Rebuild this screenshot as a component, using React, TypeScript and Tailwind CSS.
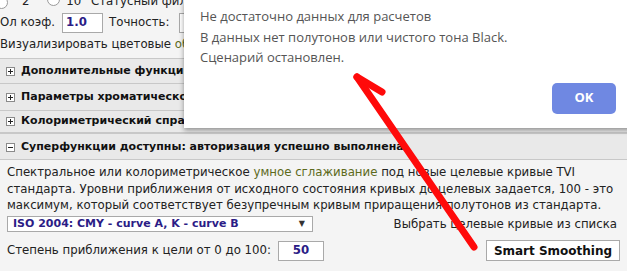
function Radio() {
  return (
    <span className="inline-block w-[13px] h-[13px] rounded-full border border-[#9a9a9a] bg-white shrink-0" />
  );
}

function Toggle({ open }: { open?: boolean }) {
  return (
    <svg width="9" height="9" viewBox="0 0 9 9" className="shrink-0">
      <rect x="0.5" y="0.5" width="8" height="8" fill="#fff" stroke="#8a8a8a" />
      <path d="M2 4.5h5" stroke="#222" />
      {!open && <path d="M4.5 2v5" stroke="#222" />}
    </svg>
  );
}

function Section({ title, open, h }: { title: string; open?: boolean; h: string }) {
  return (
    <div className={`${h} flex items-center gap-[6px] pl-[6px] border-t border-[#c8c8c8] bg-[#e9e9e9] font-bold text-[11px] text-[#111] whitespace-nowrap`}>
      <Toggle open={open} />
      <span>{title}</span>
    </div>
  );
}

export default function App() {
  return (
    <div className="relative w-[627px] h-[271px] overflow-hidden bg-[#f4f4f4] text-[11.75px] text-[#222] font-['DejaVu_Sans',Verdana,sans-serif]">
      {/* top settings rows, partly scrolled out */}
      <div className="-mt-[8px] whitespace-nowrap">
        <div className="h-[20px] flex items-center -ml-[5px]">
          <Radio />
          <span className="ml-[14px]">2°</span>
          <span className="ml-[12px]"><Radio /></span>
          <span className="ml-[6px]">10° Статусный фильтр</span>
        </div>
        <div className="h-[22px] flex items-center">
          <span>Ол коэф.</span>
          <span className="ml-[7px] w-[41px] h-[20px] bg-white border border-[#a9a9a9] flex items-center pl-[3px] font-bold text-[#2b1c86]">1.0</span>
          <span className="ml-[6px]">Точность:</span>
          <span className="ml-[10px] w-[40px] h-[20px] bg-white border border-[#a9a9a9]" />
        </div>
        <div className="h-[22px] flex items-center">
          <span>Визуализировать цветовые&nbsp;</span>
          <span className="text-[#5d6a1c]">обходы</span>
        </div>
      </div>

      <div className="mt-[2px]">
        <Section h="h-[25px]" title="Дополнительные функции" />
        <Section h="h-[27px]" title="Параметры хроматической адаптации" />
        <Section h="h-[22px]" title="Колориметрический справочник" />
        <Section h="h-[27px] pt-[2px] border-t-2" title="Суперфункции доступны: авторизация успешно выполнена" open />
        <div className="border-t border-[#c8c8c8] px-[7px] pt-[4px]">
          <p className="leading-[16.5px] whitespace-nowrap">
            Спектральное или колориметрическое <span className="text-[#5d6a1c]">умное сглаживание</span> под новые целевые кривые TVI
            <br />
            стандарта. Уровни приближения от исходного состояния кривых до целевых задается, 100 - это
            <br />
            максимум, который соответствует безупречным кривым приращения полутонов из стандарта.
          </p>
          <div className="mt-[2px] flex items-center justify-between pr-[3px]">
            <div className="w-[306px] h-[16px] bg-white border border-[#a9a9a9] flex items-center justify-between pl-[5px] pr-[7px]">
              <span className="font-bold text-[11px] text-[#2b1c86]">ISO 2004: CMY - curve A, K - curve B</span>
              <span className="text-[8px] text-[#333]">▼</span>
            </div>
            <span>Выбрать целевые кривые из списка</span>
          </div>
          <div className="mt-[7px] flex items-center justify-between">
            <div className="flex items-center">
              <span>Степень приближения к цели от 0 до 100:</span>
              <span className="ml-[7px] w-[46px] h-[20px] bg-white border border-[#a9a9a9] flex items-center justify-center font-bold text-[#2b1c86]">50</span>
            </div>
            <button className="w-[134px] h-[21px] bg-white border border-[#a9a9a9] font-bold text-[12px] text-[#111]">
              Smart Smoothing
            </button>
          </div>
        </div>
      </div>

      {/* alert dialog over the page */}
      <div className="absolute left-[184px] top-0 w-[456px] h-[128px] bg-white shadow-[0_2px_5px_rgba(0,0,0,0.4)] font-['Open_Sans',sans-serif] text-[13px] text-[#555] pl-[16px] pt-[6px] flex flex-col">
        <p className="leading-[20.5px]">
          Не достаточно данных для расчетов
          <br />
          В данных нет полутонов или чистого тона Black.
          <br />
          Сценарий остановлен.
        </p>
        <button className="self-end mr-[24px] mt-[15px] w-[64px] h-[31px] rounded-[5px] bg-[#6f88e2] text-white font-bold text-[13px]">
          OK
        </button>
      </div>

      {/* red hand-drawn arrow */}
      <svg className="absolute inset-0 pointer-events-none" width="627" height="271">
        <g stroke="#ff0a0a" strokeWidth="7" strokeLinecap="round" strokeLinejoin="round" fill="none">
          <path d="M474 247 L357 77" />
          <path d="M357 77 L382 92" />
        </g>
      </svg>
    </div>
  );
}
